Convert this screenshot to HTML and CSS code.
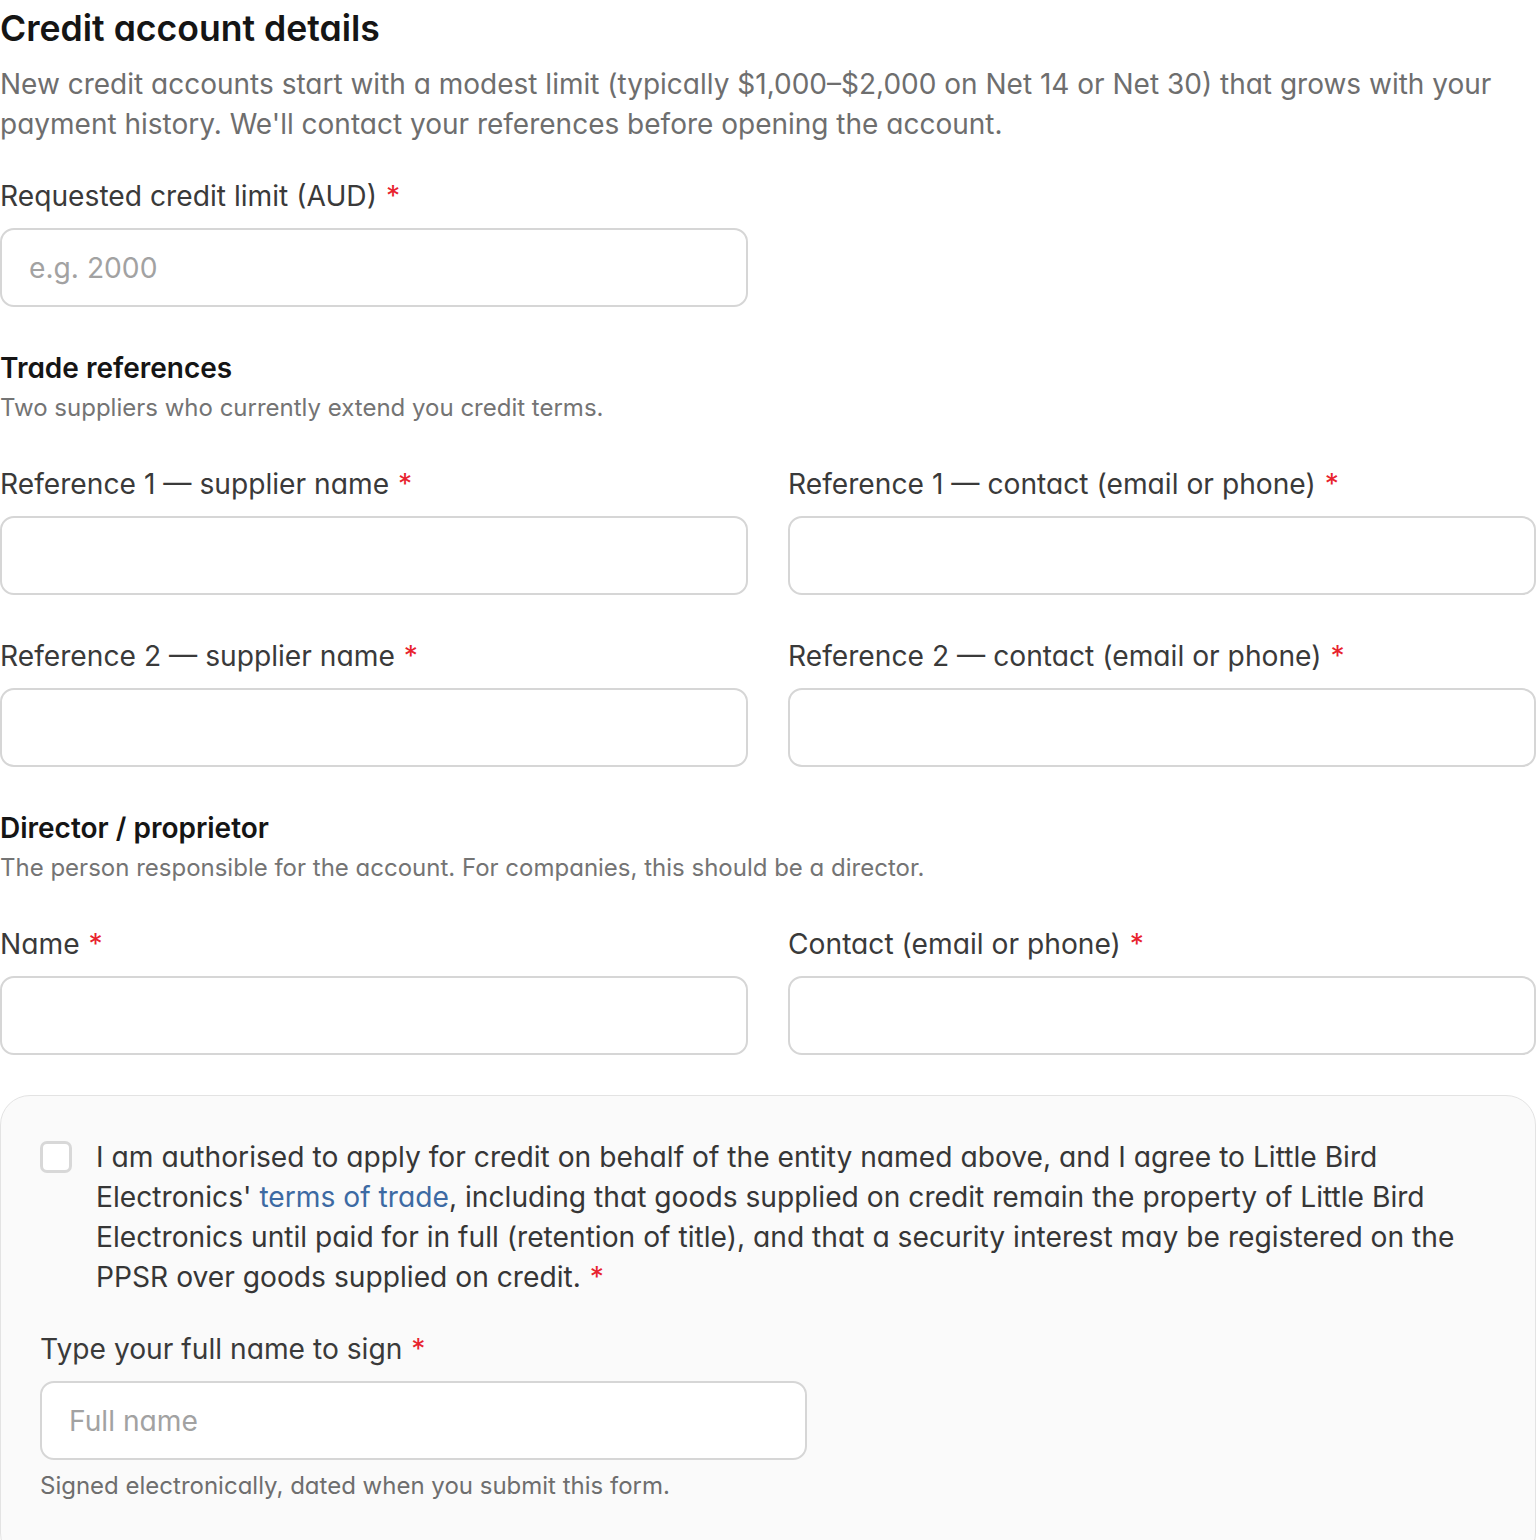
FILE: index.html
```html
<!DOCTYPE html>
<html lang="en">
<head>
  <meta charset="UTF-8">
  <title>Credit account details</title>
  <link rel="stylesheet" href="styles.css">
</head>
<body>
  <section class="credit">
    <h2 class="title">Credit account details</h2>
    <p class="intro">New credit accounts start with a modest limit (typically $1,000–$2,000 on Net 14 or Net 30) that grows with your payment history. We'll contact your references before opening the account.</p>

    <div class="field field-limit">
      <label for="limit">Requested credit limit (AUD) <span class="req">*</span></label>
      <input type="text" id="limit" placeholder="e.g. 2000">
    </div>

    <!-- Trade references -->
    <div class="group">
      <h3>Trade references</h3>
      <p class="group-hint">Two suppliers who currently extend you credit terms.</p>
    </div>
    <div class="grid">
      <div class="field">
        <label for="ref1name">Reference 1 — supplier name <span class="req">*</span></label>
        <input type="text" id="ref1name">
      </div>
      <div class="field">
        <label for="ref1contact">Reference 1 — contact (email or phone) <span class="req">*</span></label>
        <input type="text" id="ref1contact">
      </div>
      <div class="field">
        <label for="ref2name">Reference 2 — supplier name <span class="req">*</span></label>
        <input type="text" id="ref2name">
      </div>
      <div class="field">
        <label for="ref2contact">Reference 2 — contact (email or phone) <span class="req">*</span></label>
        <input type="text" id="ref2contact">
      </div>
    </div>

    <!-- Director -->
    <div class="group">
      <h3>Director / proprietor</h3>
      <p class="group-hint">The person responsible for the account. For companies, this should be a director.</p>
    </div>
    <div class="grid">
      <div class="field">
        <label for="dirname">Name <span class="req">*</span></label>
        <input type="text" id="dirname">
      </div>
      <div class="field">
        <label for="dircontact">Contact (email or phone) <span class="req">*</span></label>
        <input type="text" id="dircontact">
      </div>
    </div>

    <!-- Consent -->
    <div class="consent">
      <label class="check">
        <input type="checkbox">
        <span class="box"></span>
        <span class="check-text">I am authorised to apply for credit on behalf of the entity named above, and I agree to Little Bird Electronics' <a href="#">terms of trade</a>, including that goods supplied on credit remain the property of Little Bird Electronics until paid for in full (retention of title), and that a security interest may be registered on the PPSR over goods supplied on credit. <span class="req">*</span></span>
      </label>
      <div class="field field-sign">
        <label for="signname">Type your full name to sign <span class="req">*</span></label>
        <input type="text" id="signname" placeholder="Full name">
        <p class="sign-hint">Signed electronically, dated when you submit this form.</p>
      </div>
    </div>
  </section>
</body>
</html>
```

FILE: styles.css
```css
  body {
    margin: 0;
    font-family: 'Inter', 'Noto Sans', sans-serif;
    font-feature-settings: "cv11";
    background: #ffffff;
    color: #333333;
  }
  .credit {
    width: 1536px;
  }
  .title {
    margin: 0;
    font-size: 35.6px;
    line-height: 58px;
    font-weight: 600;
    color: #151515;
  }
  .intro {
    margin: 6px 0 0;
    font-size: 28px;
    line-height: 40px;
    color: #6e6e6e;
  }
  .field label {
    display: block;
    font-size: 28.2px;
    line-height: 40px;
    color: #3a3a3a;
    margin-bottom: 12px;
  }
  .req {
    color: #e8232e;
    margin-left: 1px;
  }
  .field input {
    display: block;
    box-sizing: border-box;
    width: 100%;
    height: 79px;
    padding: 0 27px;
    border: 2px solid #d6d6d6;
    border-radius: 14px;
    background: #ffffff;
    font-family: inherit;
    font-feature-settings: "cv11";
    font-size: 28.2px;
    color: #333;
    outline: none;
  }
  .field input::placeholder {
    color: #a2a2a2;
  }
  .field-limit {
    margin-top: 32px;
    width: 748px;
  }
  .group {
    margin-top: 41px;
  }
  .group h3 {
    margin: 0;
    font-size: 28px;
    line-height: 40px;
    font-weight: 600;
    color: #151515;
  }
  .group-hint {
    margin: 0;
    font-size: 24px;
    line-height: 40px;
    color: #747474;
  }
  .grid {
    margin-top: 36px;
    display: grid;
    grid-template-columns: 1fr 1fr;
    column-gap: 40px;
    row-gap: 41px;
  }
  .consent {
    margin-top: 40px;
    padding: 41px 39px 60px;
    background: #fafafa;
    border: 1px solid #e3e3e3;
    border-radius: 30px;
  }
  .check {
    display: flex;
    gap: 24px;
    align-items: flex-start;
    cursor: pointer;
  }
  .check input {
    display: none;
  }
  .check .box {
    flex: none;
    box-sizing: border-box;
    width: 32px;
    height: 32px;
    margin-top: 4px;
    border: 3px solid #d8d8d8;
    border-radius: 7px;
    background: #ffffff;
  }
  .check-text {
    font-size: 28.2px;
    line-height: 40px;
    color: #363636;
  }
  .check-text a {
    color: #3d6aa3;
    text-decoration: none;
  }
  .field-sign {
    margin-top: 32px;
    width: 767px;
  }
  .sign-hint {
    margin: 10px 0 0;
    font-size: 24px;
    line-height: 32px;
    color: #6e6e6e;
  }
```
